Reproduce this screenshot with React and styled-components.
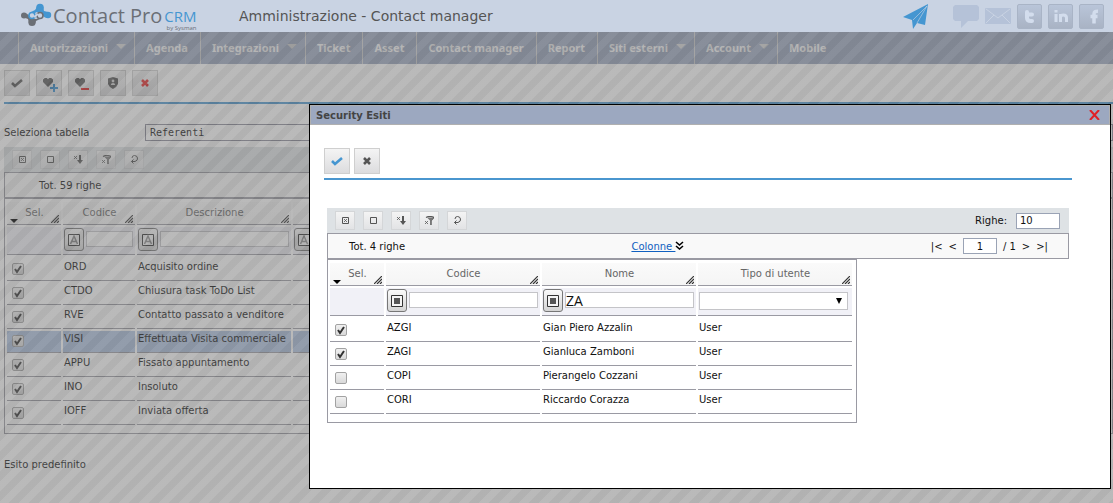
import React, { useState } from 'react'
import styled, { createGlobalStyle } from 'styled-components'

const GlobalStyle = createGlobalStyle`
  * {
    box-sizing: border-box;
  }

  body {
    margin: 0;
    background: #fff;
    color: #111;
    font-family: "DejaVu Sans", Verdana, sans-serif;
    font-size: 10px;
  }

  button, input, select {
    font: inherit;
    color: inherit;
    margin: 0;
    padding: 0;
  }
`

const Page = styled.div`
  position: relative;
  min-height: 100vh;
  overflow: hidden;
`

/* ---------- header ---------- */

const Header = styled.header`
  display: flex;
  align-items: center;
  height: 32px;
  padding: 0 9px 0 20px;
  background: #c9d3e3;
`

const Brand = styled.a`
  display: flex;
  align-items: flex-start;
  width: 219px;
  height: 32px;
  color: #6b6f76;
  text-decoration: none;
  font-family: "Open Sans", "Noto Sans", sans-serif;
`

const BrandName = styled.span`
  font-size: 20px;
  font-weight: 500;
  line-height: 32px;
  white-space: nowrap;
`

const BrandSide = styled.span`
  display: flex;
  flex-direction: column;
  align-items: flex-end;
  margin-left: 2px;
  padding-top: 8px;
`

const BrandCrm = styled.span`
  color: #4596d1;
  font-size: 15px;
  font-weight: 500;
  line-height: 16px;
`

const BrandBy = styled.span`
  font-size: 6px;
  line-height: 8px;
  white-space: nowrap;
`

const Title = styled.h1`
  margin: 0;
  color: #555;
  font-size: 14px;
  font-weight: normal;
  line-height: 34px;
`

const Social = styled.div`
  display: flex;
  align-items: center;
  gap: 6px;
  margin-left: auto;

  a {
    display: flex;
  }

  a:first-child {
    margin-right: 19px;
  }
`

const SocialBox = styled.span`
  display: flex;
  width: 25px;
  height: 25px;
  border: 1px solid #a9b4c6;
  border-radius: 2px;
  background: linear-gradient(#b9c5d9, #a9b3c4);
`

/* ---------- menu ---------- */

const Nav = styled.nav`
  display: flex;
  height: 32px;
  padding-left: 18px;
  background: #9ca8c0;
`

const NavItem = styled.a`
  display: flex;
  align-items: center;
  gap: 8px;
  padding: 0 ${p => (p.$menu ? 8 : 12)}px 1px 11px;
  border-left: 1px solid #d5d5d5;
  color: #f4f4f4;
  font-family: "Noto Sans", sans-serif;
  font-size: 11px;
  font-weight: bold;
  text-decoration: none;
  white-space: nowrap;
`

const Caret = styled.span`
  margin-bottom: 2px;
  border: 5px solid transparent;
  border-top-color: #d5d5d5;
  border-bottom-width: 0;
`

/* ---------- shared bits ---------- */

const Actions = styled.div`
  display: flex;
  gap: ${p => (p.$compact ? 4 : 6)}px;
  padding-bottom: ${p => (p.$compact ? 4 : 6)}px;
  border-bottom: 2px solid #4a96cf;
`

const ActionButton = styled.button`
  display: flex;
  align-items: center;
  justify-content: center;
  width: 26px;
  height: 26px;
  border: 1px solid #cfcfcf;
  background: linear-gradient(#f4f4f4, #dcdcde);
`

const TableBar = styled.div`
  display: flex;
  align-items: center;
  gap: 8px;
  height: 25px;
  padding: 0 9px 0 8px;
  background: #dee2e5;
`

const SmallButton = styled.button`
  display: flex;
  align-items: center;
  justify-content: center;
  width: 20px;
  height: 19px;
  border: 1px solid #d4d6d8;
  background: linear-gradient(#f4f4f4, #e2e3e5);
`

const InfoBar = styled.div`
  display: flex;
  align-items: center;
  height: 26px;
  padding: 0 20px 0 ${p => (p.$wide ? 34 : 21)}px;
  border: 1px solid #9a9aa3;
  background: #f9f9f9;
`

const RowsField = styled.label`
  display: flex;
  align-items: center;
  gap: 9px;
  margin-left: auto;
`

const NumberInput = styled.input`
  width: ${p => p.$width}px;
  height: 16px;
  padding: 0 3px;
  border: 1px solid #9aa3b5;
  background: #fff;
  text-align: ${p => p.$align || 'left'};
`

const ColumnsLink = styled.a`
  display: flex;
  align-items: center;
  margin: 0 auto;
  padding-right: 20px;
  color: #1060c0;
  text-decoration: underline;
`

const Pager = styled.div`
  display: flex;
  align-items: center;
  gap: 6px;

  button {
    border: 0;
    background: none;
  }
`

const Grid = styled.div`
  width: ${p => p.$width || 'auto'};
  padding: 1px 2px 6px 0;
  border: 1px solid #9a9aa3;
`

const Table = styled.table`
  table-layout: fixed;
  width: ${p => p.$width};
  border-collapse: separate;
  border-spacing: 2px;
`

const Th = styled.th`
  height: 23px;
  padding: 0;
  border-bottom: 1px solid #9a9aa3;
  background: linear-gradient(#fafafa, #f5f5f5);
  color: #666;
  font-weight: normal;
`

const HeadCell = styled.div`
  display: grid;
  grid-template-columns: 8px 1fr 10px;
  align-items: end;
  height: 22px;
  padding: 0 0 0 3px;
  line-height: 22px;

  svg {
    margin-bottom: 1px;
  }
`

const FilterTd = styled.td`
  height: 28px;
  padding: 1px 2px 0 1px;
  overflow: hidden;
  border-bottom: 1px solid #9a9aa3;
  background: #f1f1f7;
  vertical-align: top;
`

const FilterCell = styled.div`
  display: flex;
  align-items: flex-start;
  gap: 2px;
`

const FilterButton = styled.button`
  display: flex;
  align-items: center;
  justify-content: center;
  flex: none;
  width: 20px;
  height: 23px;
  border: 1px solid #777;
  border-radius: 3px;
  background: linear-gradient(#fafafa, #d4d4d4);
`

const FilterInput = styled.input`
  flex: 1;
  min-width: 0;
  height: 16px;
  margin-top: 3px;
  border: 1px solid #c4c4c8;
  background: #fff;
  font-family: "Open Sans", sans-serif;
  font-size: 14px;
  line-height: 14px;
`

const SelectBox = styled.div`
  display: grid;
  align-items: center;
  margin: 3px 2px 0 0;

  > * {
    grid-area: 1 / 1;
  }

  svg {
    justify-self: end;
    margin-right: 6px;
    pointer-events: none;
  }
`

const FilterSelect = styled.select`
  appearance: none;
  width: 100%;
  height: 18px;
  border: 1px solid #c4c4c8;
  border-radius: 0;
  background: #fff;
`

const Td = styled.td`
  height: ${p => (p.$tall ? 24 : 22)}px;
  padding: ${p => (p.$tall ? 4 : 2)}px 1px 0;
  border-bottom: 1px solid #9a9aa3;
  background: ${p => (p.$selected ? '#b0c4e2' : 'transparent')};
  line-height: 12px;
  vertical-align: top;
  white-space: nowrap;
`

const Check = styled.input`
  appearance: none;
  display: block;
  width: 12px;
  height: 12px;
  margin: 2px 0 0 4px;
  border: 1px solid #a2a2a2;
  border-radius: 2px;
  background: linear-gradient(#f0f0f0, #d9d9d9);

  &:checked {
    background: url("data:image/svg+xml,%3Csvg xmlns='http://www.w3.org/2000/svg' width='10' height='10'%3E%3Cpath d='M2 5l2 3 4-6' fill='none' stroke='%23333' stroke-width='2'/%3E%3C/svg%3E"),
      linear-gradient(#f0f0f0, #d9d9d9);
  }
`

/* ---------- page content ---------- */

const Main = styled.main`
  padding: 6px 0 0 4px;
`

const Field = styled.div`
  display: flex;
  align-items: center;
  height: 18px;
  margin: 19px 0 6px;

  label {
    width: 141px;
  }
`

const TableSelect = styled.select`
  appearance: none;
  flex: 1;
  height: 17px;
  padding: 0 4px;
  border: 1px solid #8a8a99;
  border-radius: 0;
  background: #fff;
  font-family: "DejaVu Sans Mono", monospace;
`

const Note = styled.p`
  margin: 24px 0 0;
  line-height: 14px;
`

const Overlay = styled.div`
  position: absolute;
  inset: 32px 0 0;
  background: linear-gradient(
      135deg,
      rgba(101, 101, 101, 0.5) 25%,
      rgba(117, 117, 117, 0.5) 25% 50%,
      rgba(101, 101, 101, 0.5) 50% 75%,
      rgba(117, 117, 117, 0.5) 75%
    )
    0 0 / 20px 20px;
`

/* ---------- dialog ---------- */

const Dialog = styled.section`
  position: absolute;
  top: 104px;
  right: 2px;
  bottom: 14px;
  left: 309px;
  border: 1px solid #000;
  background: #fff;
`

const DialogBar = styled.div`
  display: flex;
  align-items: center;
  justify-content: space-between;
  height: 20px;
  padding: 0 9px 0 5px;
  border: 1px solid #b0b0b0;
  background: #9ca8c0;

  h2 {
    margin: 0;
    color: #444;
    font-size: 10px;
  }

  button {
    display: flex;
    border: 0;
    background: none;
  }
`

const DialogBody = styled.div`
  padding: 23px 38px 0 14px;
`

const DialogPanel = styled.div`
  margin: 28px 3px 0;
`

/* ---------- icons ---------- */

const Tick = ({ color }) => (
  <svg width="12" height="10" viewBox="0 0 12 10">
    <path d="M1 5l3 3 7-6" fill="none" stroke={color} strokeWidth="2.6" />
  </svg>
)

const Cross = ({ color }) => (
  <svg width="8" height="8" viewBox="0 0 8 8">
    <path d="M1 1l6 6M7 1l-6 6" stroke={color} strokeWidth="2.6" />
  </svg>
)

const Heart = ({ sign }) => (
  <svg width="18" height="18" viewBox="0 0 18 18">
    <path d="M8 13L3 8V5.500L4.800 4h2L8 5.300 9.200 4h2L13 5.500V8z" fill="#555" />
    {sign === 'plus' ? (
      <path d="M10 14h8M14 10v8" stroke="#2f86c8" strokeWidth="2" />
    ) : (
      <path d="M9 15h8" stroke="#e02020" strokeWidth="2" />
    )}
  </svg>
)

const Shield = () => (
  <svg width="10" height="12" viewBox="0 0 10 12">
    <path d="M5 0l5 1.5V7q-1 3-5 5Q1 10 0 7V1.5z" fill="#555" />
    <circle cx="5" cy="4" r="1.4" fill="#ddd" />
    <path d="M2.8 8q0-2 2.2-2t2.2 2z" fill="#ddd" />
  </svg>
)

const toolIcons = {
  'Seleziona tutto': (
    <>
      <path d="M1.5 1.5h6v6h-6z" />
      <path d="M3 3l3 3M6 3L3 6" strokeWidth=".8" />
    </>
  ),
  'Deseleziona tutto': <path d="M1.5 1.5h6v6h-6z" />,
  'Ordina': (
    <>
      <path d="M0 1l3 3M3 1L0 4" strokeWidth=".8" />
      <path d="M6 0v6" strokeWidth="2" />
      <path d="M3 5h6L6 9z" fill="#555" stroke="none" />
    </>
  ),
  'Filtra': (
    <>
      <path d="M1 1.500Q5-.5 9 1.500L6 4.500V9" strokeWidth="1.2" />
      <path d="M2 1.500h6L6.500 4.500V9H5V4.500z" fill="#777" stroke="none" />
      <path d="M0 5l3 3M3 5L0 8" strokeWidth=".8" />
    </>
  ),
  'Ripristina': (
    <>
      <path d="M2 3Q2 .5 4.500.5T7.500 3 5 6.500H1.500" />
      <path d="M3.500 4.500l-2 2 2 2" />
    </>
  ),
}

const ToolIcon = ({ name }) => (
  <svg width="9" height="9" viewBox="0 0 9 9" fill="none" stroke="#555">
    {toolIcons[name]}
  </svg>
)

const Grip = () => (
  <svg width="8" height="8" viewBox="0 0 8 8">
    <path d="M0 8l8-8M3 8l5-5M6 8l2-2" stroke="#333" strokeWidth="1.2" />
  </svg>
)

const SortArrow = () => (
  <svg width="8" height="4" viewBox="0 0 8 4" style={{ display: 'block' }}>
    <path d="M0 0h8L4 4z" fill="#000" />
  </svg>
)

const FilterIcon = ({ letter }) => (
  <svg width="12" height="12" viewBox="0 0 12 12">
    <path d="M.5.5h11v11H.5z" fill="#f4f4f4" stroke="#333" />
    {letter ? (
      <path d="M2.500 10L6 2l3.500 8M4 7.500h4" fill="none" stroke="#888" strokeWidth="1.500" />
    ) : (
      <path d="M3 3h6v6H3z" fill="#555" />
    )}
  </svg>
)

const Logo = () => (
  <svg width="33" height="32" viewBox="0 0 33 32">
    <g fill="#6b6f76">
      <circle cx="4" cy="15.500" r="3" />
      <circle cx="12" cy="22.500" r="3.600" />
      <path d="M5 13l4 2 3 3 4 1 4-1v1l-4 2-1 3-6-1-1-4-4-1.500z" />
    </g>
    <g fill="#4596d1">
      <circle cx="20" cy="7.500" r="3.800" />
      <circle cx="28" cy="15" r="3.200" />
      <path d="M11 12l4-2 2-3h6l1 4 4 1-1 6-3-1-3-4-4-1-4 2z" />
    </g>
    <circle cx="12" cy="15.500" r="3" fill="#c9d3e3" stroke="#4596d1" strokeWidth="1.600" />
    <circle cx="20" cy="15.500" r="3" fill="#c9d3e3" stroke="#6b6f76" strokeWidth="1.600" />
    <path d="M14 17l4-3" stroke="#c9d3e3" strokeWidth="2" />
  </svg>
)

/* ---------- components ---------- */

const menu = [
  { label: 'Autorizzazioni', menu: true },
  { label: 'Agenda' },
  { label: 'Integrazioni', menu: true },
  { label: 'Ticket' },
  { label: 'Asset' },
  { label: 'Contact manager' },
  { label: 'Report' },
  { label: 'Siti esterni', menu: true },
  { label: 'Account', menu: true },
  { label: 'Mobile' },
]

const outcomes = [
  ['ORD', 'Acquisito ordine'],
  ['CTDO', 'Chiusura task ToDo List'],
  ['RVE', 'Contatto passato a venditore'],
  ['VISI', 'Effettuata Visita commerciale'],
  ['APPU', 'Fissato appuntamento'],
  ['INO', 'Insoluto'],
  ['IOFF', 'Inviata offerta'],
]

const users = [
  ['AZGI', 'Gian Piero Azzalin', true],
  ['ZAGI', 'Gianluca Zamboni', true],
  ['COPI', 'Pierangelo Cozzani', false],
  ['CORI', 'Riccardo Corazza', false],
]

const TableTools = ({ children }) => (
  <TableBar>
    {Object.keys(toolIcons).map(name => (
      <SmallButton key={name} aria-label={name}>
        <ToolIcon name={name} />
      </SmallButton>
    ))}
    {children}
  </TableBar>
)

const HeaderCell = ({ children, sorted }) => (
  <Th>
    <HeadCell>
      <span>{sorted && <SortArrow />}</span>
      <span>{children}</span>
      <Grip />
    </HeadCell>
  </Th>
)

const TextFilter = ({ label, letter, value = '' }) => {
  const [text, setText] = useState(value)
  return (
    <FilterTd>
      <FilterCell>
        <FilterButton aria-label={`Tipo filtro ${label}`}>
          <FilterIcon letter={letter} />
        </FilterButton>
        <FilterInput aria-label={label} value={text} onChange={e => setText(e.target.value)} />
      </FilterCell>
    </FilterTd>
  )
}

const OutcomesTable = () => (
  <Grid>
    <Table $width="100%">
      <colgroup>
        <col style={{ width: 54 }} />
        <col style={{ width: 72 }} />
        <col style={{ width: 154 }} />
        <col />
      </colgroup>
      <thead>
        <tr>
          <HeaderCell sorted>Sel.</HeaderCell>
          <HeaderCell>Codice</HeaderCell>
          <HeaderCell>Descrizione</HeaderCell>
          <HeaderCell />
        </tr>
      </thead>
      <tbody>
        <tr>
          <FilterTd />
          <TextFilter label="Codice" letter />
          <TextFilter label="Descrizione" letter />
          <TextFilter label="Note" letter />
        </tr>
        {outcomes.map(([code, text], i) => (
          <tr key={code}>
            <Td $tall={i === 0} $selected={code === 'VISI'}>
              <Check type="checkbox" defaultChecked aria-label={text} />
            </Td>
            <Td $tall={i === 0} $selected={code === 'VISI'}>{code}</Td>
            <Td $tall={i === 0} $selected={code === 'VISI'}>{text}</Td>
            <Td $tall={i === 0} $selected={code === 'VISI'} />
          </tr>
        ))}
      </tbody>
    </Table>
  </Grid>
)

const UsersTable = () => (
  <Grid $width="530px">
    <Table $width="526px">
      <colgroup>
        <col style={{ width: 54 }} />
        <col style={{ width: 154 }} />
        <col style={{ width: 154 }} />
        <col style={{ width: 154 }} />
      </colgroup>
      <thead>
        <tr>
          <HeaderCell sorted>Sel.</HeaderCell>
          <HeaderCell>Codice</HeaderCell>
          <HeaderCell>Nome</HeaderCell>
          <HeaderCell>Tipo di utente</HeaderCell>
        </tr>
      </thead>
      <tbody>
        <tr>
          <FilterTd />
          <TextFilter label="Codice" />
          <TextFilter label="Nome" value="ZA" />
          <FilterTd>
            <SelectBox>
              <FilterSelect aria-label="Tipo di utente">
                <option></option>
                <option>User</option>
              </FilterSelect>
              <svg width="6" height="6" viewBox="0 0 6 6">
                <path d="M0 0h6L3 6z" />
              </svg>
            </SelectBox>
          </FilterTd>
        </tr>
        {users.map(([code, name, on], i) => (
          <tr key={code}>
            <Td $tall={i === 0}>
              <Check type="checkbox" defaultChecked={on} aria-label={name} />
            </Td>
            <Td $tall={i === 0}>{code}</Td>
            <Td $tall={i === 0}>{name}</Td>
            <Td $tall={i === 0}>User</Td>
          </tr>
        ))}
      </tbody>
    </Table>
  </Grid>
)

const TopBar = () => (
  <Header>
    <Brand href="#">
      <Logo />
      <BrandName>Contact Pro</BrandName>
      <BrandSide>
        <BrandCrm>CRM</BrandCrm>
        <BrandBy>by Sysman</BrandBy>
      </BrandSide>
    </Brand>
    <Title>Amministrazione - Contact manager</Title>
    <Social>
      <a href="#" aria-label="Invia">
        <svg width="25" height="25" viewBox="0 0 25 25">
          <path d="M25 0L0 13l9 3 1 9 4-6 8 2z" fill="#4596d1" />
          <path d="M24 2L10 16M24 2L14 19" stroke="#c9d3e3" strokeWidth=".6" />
        </svg>
      </a>
      <a href="#" aria-label="Messaggi">
        <svg width="26" height="23" viewBox="0 0 26 23">
          <path d="M2 0h22l2 2v12l-2 2h-9l-7 7v-7H2l-2-2V2z" fill="#b5c2d8" />
        </svg>
      </a>
      <a href="#" aria-label="Posta">
        <svg width="26" height="16" viewBox="0 0 26 16">
          <rect width="26" height="16" rx="1" fill="#b5c2d8" />
          <path d="M1 1l12 9L25 1M1 15l8-8M25 15l-8-8" fill="none" stroke="#c9d3e3" />
        </svg>
      </a>
      <a href="#" aria-label="Twitter">
        <SocialBox>
          <svg width="23" height="23" viewBox="0 0 23 23" fill="none" stroke="#d3dded" strokeWidth="4">
            <path d="M9 7v6q0 3 4 3h1M9 9.500h5" strokeLinecap="round" />
          </svg>
        </SocialBox>
      </a>
      <a href="#" aria-label="LinkedIn">
        <SocialBox>
          <svg width="23" height="23" viewBox="0 0 23 23" fill="none" stroke="#d3dded" strokeWidth="3">
            <path d="M7 9v8M7 5v2.500M11.500 17V9M11.500 12q0-2 3-2t3 3v4" />
          </svg>
        </SocialBox>
      </a>
      <a href="#" aria-label="Facebook">
        <SocialBox>
          <svg width="23" height="23" viewBox="0 0 23 23" fill="none" stroke="#d3dded" strokeWidth="3.500">
            <path d="M14 18.500V9q0-3 4-2.800M10.500 11.500h7" />
          </svg>
        </SocialBox>
      </a>
    </Social>
  </Header>
)

const SecurityDialog = () => (
  <Dialog role="dialog" aria-label="Security Esiti">
    <DialogBar>
      <h2>Security Esiti</h2>
      <button aria-label="Chiudi">
        <svg width="11" height="10" viewBox="0 0 11 10">
          <path d="M1 0l9 10M10 0L1 10" stroke="#e01f26" strokeWidth="2" />
        </svg>
      </button>
    </DialogBar>
    <DialogBody>
      <Actions $compact>
        <ActionButton aria-label="Conferma"><Tick color="#4596d1" /></ActionButton>
        <ActionButton aria-label="Annulla"><Cross color="#555" /></ActionButton>
      </Actions>
      <DialogPanel>
        <TableTools>
          <RowsField>
            Righe:
            <NumberInput $width={44} defaultValue="10" />
          </RowsField>
        </TableTools>
        <InfoBar>
          <span>Tot. 4 righe</span>
          <ColumnsLink href="#">
            Colonne&nbsp;
            <svg width="9" height="10" viewBox="0 0 9 10">
              <path d="M1 1l3.500 3L8 1M1 5l3.500 3L8 5" fill="none" stroke="#000" strokeWidth="1.600" />
            </svg>
          </ColumnsLink>
          <Pager>
            <button>|&lt;</button>
            <button>&lt;</button>
            <NumberInput $width={34} $align="center" defaultValue="1" aria-label="Pagina" />
            <span>/ 1</span>
            <button>&gt;</button>
            <button>&gt;|</button>
          </Pager>
        </InfoBar>
        <UsersTable />
      </DialogPanel>
    </DialogBody>
  </Dialog>
)

const App = () => (
  <Page>
    <GlobalStyle />
    <TopBar />
    <Nav>
      {menu.map(item => (
        <NavItem key={item.label} href="#" $menu={item.menu}>
          {item.label}
          {item.menu && <Caret />}
        </NavItem>
      ))}
    </Nav>
    <Main>
      <Actions>
        <ActionButton aria-label="Salva"><Tick color="#555" /></ActionButton>
        <ActionButton aria-label="Aggiungi preferito"><Heart sign="plus" /></ActionButton>
        <ActionButton aria-label="Rimuovi preferito"><Heart sign="minus" /></ActionButton>
        <ActionButton aria-label="Security"><Shield /></ActionButton>
        <ActionButton aria-label="Chiudi"><Cross color="#e02020" /></ActionButton>
      </Actions>
      <Field>
        <label htmlFor="tabella">Seleziona tabella</label>
        <TableSelect id="tabella">
          <option>Referenti</option>
        </TableSelect>
      </Field>
      <TableTools />
      <InfoBar $wide>
        <span>Tot. 59 righe</span>
      </InfoBar>
      <OutcomesTable />
      <Note>Esito predefinito</Note>
    </Main>
    <Overlay />
    <SecurityDialog />
  </Page>
)

export default App
